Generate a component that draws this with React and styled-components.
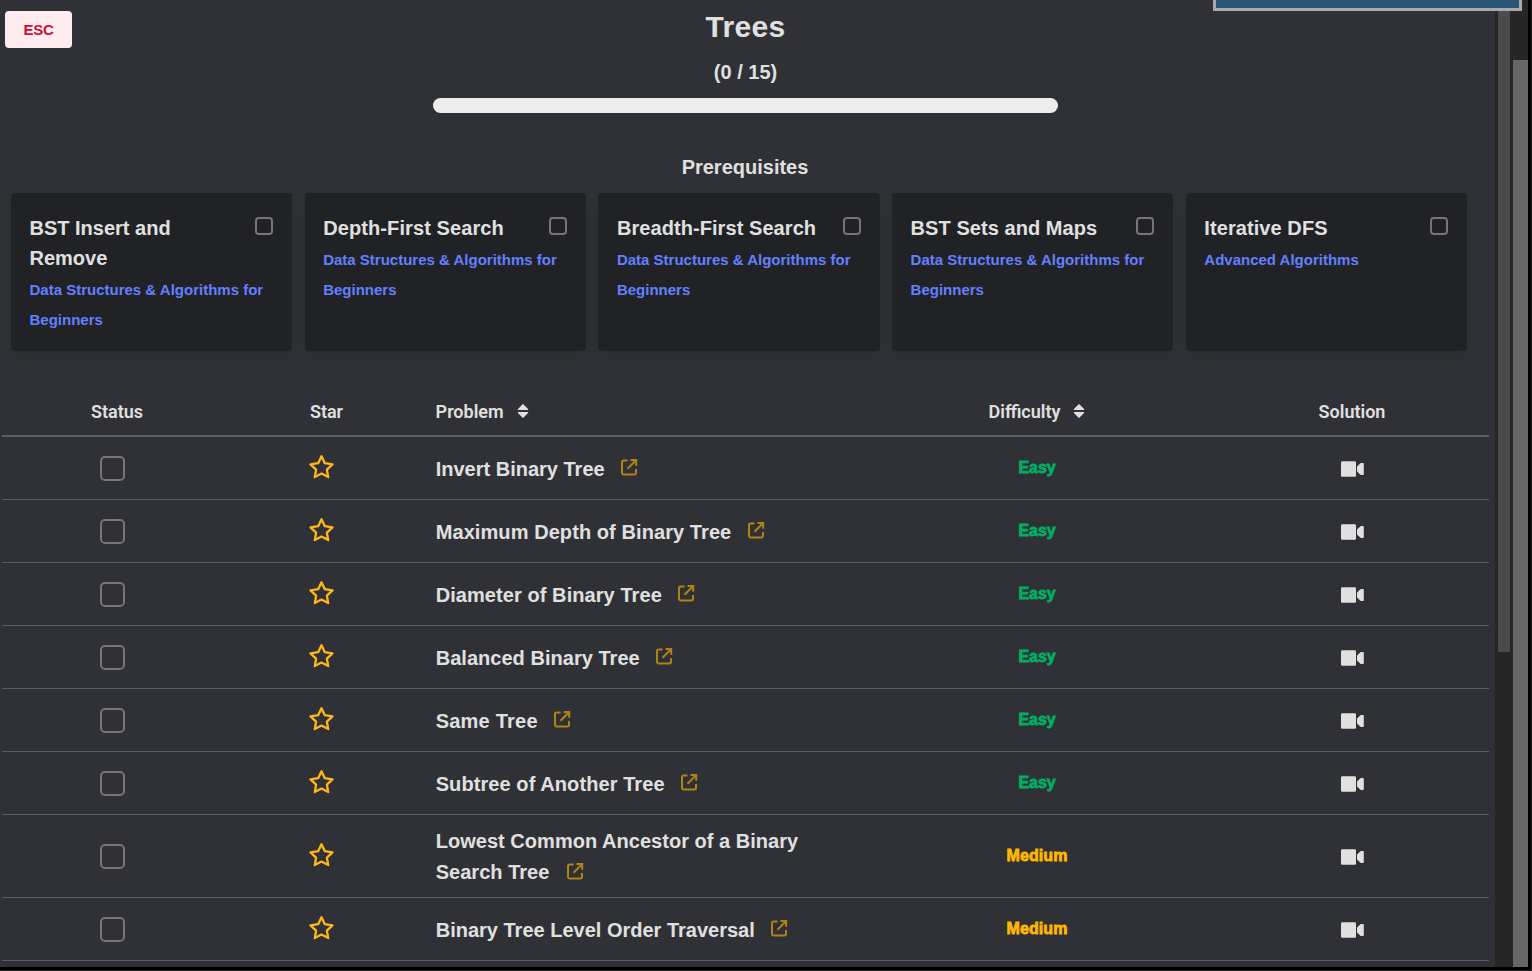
import React from 'react';
import styled, { createGlobalStyle } from 'styled-components';

const GlobalStyle = createGlobalStyle`
  *, *::before, *::after { box-sizing: border-box; }
  body {
    margin: 0;
    background: #000;
    color: #e0e0e0;
    font-family: "Liberation Sans", Arial, sans-serif;
    overflow: hidden;
  }
  h1, h2, h3, p { margin: 0; }
`;

const Screen = styled.div`
  position: relative;
  display: flex;
  width: 1532px;
  height: 971px;
  padding-right: 3px;
  padding-bottom: 3px;
  overflow: hidden;
  background: #000;
  border-right: 1px solid #262626;
  border-bottom: 1px solid #262626;
`;

const Panel = styled.main`
  flex: 1;
  min-width: 0;
  overflow: hidden;
  background: #303136;
`;

const Track = styled.div`
  flex: none;
  width: ${(p) => p.$width}px;
  padding: ${(p) => p.$pad};
  background: #262626;
`;

const Thumb = styled.div`
  height: ${(p) => p.$height};
  background: ${(p) => p.$color};
`;

const FloatingBox = styled.div`
  position: absolute;
  top: -20px;
  right: 9px;
  width: 309px;
  height: 31px;
  background: #295578;
  border: 3px solid #a9a9a9;
`;

const Header = styled.header`
  display: grid;
  grid-template-columns: 433px 625px 1fr;
  height: 113px;
`;

const EscButton = styled.button`
  width: 67px;
  height: 37px;
  margin: 11px 0 0 5px;
  padding: 0;
  border: 0;
  border-radius: 4px;
  background: #feecf0;
  color: #cc0f35;
  font: bold 15px/37px "Liberation Sans", Arial, sans-serif;
  letter-spacing: -0.2px;
`;

const Heading = styled.div`
  text-align: center;
`;

const Title = styled.h1`
  padding-top: 4px;
  font-size: 30px;
  letter-spacing: 0.3px;
  line-height: 45px;
`;

const Count = styled.p`
  padding-top: 8px;
  font-size: 20px;
  font-weight: bold;
  line-height: 30px;
`;

const Progress = styled.div`
  height: 15px;
  margin-top: 11px;
  border-radius: 8px;
  background: #ededed;
`;

const SectionTitle = styled.h2`
  padding: 39px 5px 0 0;
  font-size: 20px;
  line-height: 30px;
  text-align: center;
`;

const Cards = styled.section`
  display: grid;
  grid-template-columns: repeat(5, 1fr);
  gap: 12.5px;
  margin: 11px 28px 0 11px;
`;

const Card = styled.article`
  display: flex;
  justify-content: space-between;
  height: 158px;
  padding: 20px 18.85px 0 18.5px;
  border-radius: 4px;
  background: #212226;
  box-shadow: 0 8px 16px -2px rgba(10, 10, 10, 0.1);
`;

const CardText = styled.div`
  width: 0;
  flex: 1;
`;

const CardTitle = styled.h3`
  width: 205px;
  font-size: 20px;
  letter-spacing: ${(p) => p.$tracking}px;
  line-height: 30px;
`;

const Course = styled.p`
  width: 244px;
  margin-top: 2px;
  color: #6380ff;
  font-size: 15px;
  font-weight: bold;
  line-height: 30px;
`;

const Checkbox = styled.span`
  flex: none;
  display: block;
  width: ${(p) => p.$size}px;
  height: ${(p) => p.$size}px;
  margin-top: ${(p) => p.$top || 0}px;
  border: 2px solid #767676;
  border-radius: ${(p) => (p.$size > 20 ? 5 : 4)}px;
`;

const Table = styled.section`
  width: 1487px;
  margin: 36px 0 0 2px;
`;

const Row = styled.div`
  display: grid;
  grid-template-columns: 221px 197px 439px 356px 274px;
  align-items: center;
  height: ${(p) => (p.$tall ? 83 : 63)}px;
  border-bottom: 1px solid #5c5d60;
`;

const HeadRow = styled(Row)`
  height: 50px;
  padding-top: 1px;
  border-bottom: 2px solid #5c5d60;
  font: 650 18px/24px Roboto, sans-serif;
`;

const Cell = styled.div`
  display: flex;
  align-items: center;
  justify-content: center;
  gap: 13px;
  padding-top: ${(p) => p.$drop || 0}px;
  padding-left: ${(p) => p.$shift || 0}px;
`;

const StartCell = styled(Cell)`
  justify-content: flex-start;
  padding-left: 15.6px;
`;

const Problem = styled.div`
  padding: ${(p) => (p.$tall ? 1 : 2)}px 16px 0 15.7px;
  font-size: 20px;
  font-weight: bold;
  letter-spacing: ${(p) => p.$tracking}px;
  line-height: 31px;
`;

const LinkIcon = styled.svg`
  width: 18px;
  height: 18px;
  margin-left: ${(p) => (p.$tall ? 17 : 15.5)}px;
  vertical-align: ${(p) => (p.$tall ? -1 : 0)}px;
`;

const Difficulty = styled.span`
  color: ${(p) => (p.$level === 'Easy' ? '#00af63' : '#ffb800')};
  font-size: 16px;
  font-weight: bold;
  letter-spacing: ${(p) => (p.$level === 'Easy' ? -0.1 : 0.1)}px;
  line-height: 24px;
  -webkit-text-stroke: 0.8px currentColor;
`;

const StarIcon = styled.svg`
  width: 26px;
  height: 26px;
  margin-top: -2px;
`;

const Icon = styled.svg`
  display: block;
`;

const SortIcon = styled(Icon)`
  margin-top: -1px;
`;

function Sort() {
  return (
    <SortIcon width="12" height="14" viewBox="0 0 12 14" fill="#e0e0e0">
      <path d="M5.4.4a.8.8 0 0 1 1.2 0l4.4 4.5c.5.5.2 1.2-.5 1.2h-9C.8 6.1.5 5.4 1 4.900zM5.4 13.500a.8.8 0 0 0 1.2 0L11 9.100c.5-.5.2-1.200-.5-1.200h-9c-.7 0-1 .7-.5 1.200z" />
    </SortIcon>
  );
}

function External({ tall }) {
  return (
    <LinkIcon $tall={tall} viewBox="0 0 18 18" fill="none" stroke="#b08314" strokeWidth="2">
      <path d="M7.500 2.500H3.700A1.700 1.700 0 0 0 2 4.200v10.600a1.700 1.700 0 0 0 1.700 1.700h10.600a1.700 1.700 0 0 0 1.700-1.700V11" />
      <path d="M10.500 2H16.200v5.700M16 2.200 7.500 10.700" />
    </LinkIcon>
  );
}

function Star() {
  return (
    <StarIcon viewBox="0 0 26 26" fill="none" stroke="#ffb816" strokeWidth="2.3" strokeLinejoin="round">
      <path d="M12.500 2.200 15.800 9.200l7.700 1.100-5.600 5.300 1.300 7.500-6.700-3.500-6.700 3.500 1.300-7.500-5.600-5.300L9.200 9.200z" />
    </StarIcon>
  );
}

function Video() {
  return (
    <Icon width="24" height="16" viewBox="0 0 24 16" fill="#e0e0e0">
      <rect x="1" y=".3" width="15" height="15.400" rx="1.300" />
      <path d="M17 6.200c0-.5.2-.9.500-1.200l3-2.700c.3-.3.700-.4 1.100-.4h1.300c.6 0 .9.300.9.800v10.600c0 .5-.3.800-.9.800h-1.300c-.4 0-.8-.1-1.100-.4l-3-2.700c-.3-.3-.5-.7-.5-1.200z" />
    </Icon>
  );
}

const beginners = 'Data Structures & Algorithms for Beginners';
const prerequisites = [
  ['BST Insert and Remove', beginners, 0],
  ['Depth-First Search', beginners, 0.1],
  ['Breadth-First Search', beginners, 0.07],
  ['BST Sets and Maps', beginners, 0.06],
  ['Iterative DFS', 'Advanced Algorithms', 0.08],
];

const problems = [
  ['Invert Binary Tree', 'Easy', 0],
  ['Maximum Depth of Binary Tree', 'Easy', 0.08],
  ['Diameter of Binary Tree', 'Easy', 0.07],
  ['Balanced Binary Tree', 'Easy', 0.03],
  ['Same Tree', 'Easy', 0.22],
  ['Subtree of Another Tree', 'Easy', 0.08],
  ['Lowest Common Ancestor of a Binary Search Tree', 'Medium', 0.03, true],
  ['Binary Tree Level Order Traversal', 'Medium', 0],
];

export default function App() {
  return (
    <Screen>
      <GlobalStyle />
      <Panel>
        <Header>
          <EscButton>ESC</EscButton>
          <Heading>
            <Title>Trees</Title>
            <Count>(0 / 15)</Count>
            <Progress />
          </Heading>
        </Header>
        <SectionTitle>Prerequisites</SectionTitle>
        <Cards>
          {prerequisites.map(([title, course, tracking]) => (
            <Card key={title}>
              <CardText>
                <CardTitle $tracking={tracking}>{title}</CardTitle>
                <Course>{course}</Course>
              </CardText>
              <Checkbox $size={18} $top={4} />
            </Card>
          ))}
        </Cards>
        <Table>
          <HeadRow>
            <Cell $shift={9}>Status</Cell>
            <Cell $shift={10}>Star</Cell>
            <StartCell>Problem <Sort /></StartCell>
            <Cell>Difficulty <Sort /></Cell>
            <Cell>Solution</Cell>
          </HeadRow>
          {problems.map(([name, level, tracking, tall]) => (
            <Row key={name} $tall={tall}>
              <Cell><Checkbox $size={25} /></Cell>
              <Cell><Star /></Cell>
              <Problem $tracking={tracking} $tall={tall}>{name}<External tall={tall} /></Problem>
              <Cell><Difficulty $level={level}>{level}</Difficulty></Cell>
              <Cell $drop={2}><Video /></Cell>
            </Row>
          ))}
        </Table>
      </Panel>
      <Track $width={18} $pad="0 3px">
        <Thumb $height="652px" $color="#4b4b4b" />
      </Track>
      <Track $width={15} $pad="60px 0 0">
        <Thumb $height="100%" $color="#666666" />
      </Track>
      <FloatingBox />
    </Screen>
  );
}
